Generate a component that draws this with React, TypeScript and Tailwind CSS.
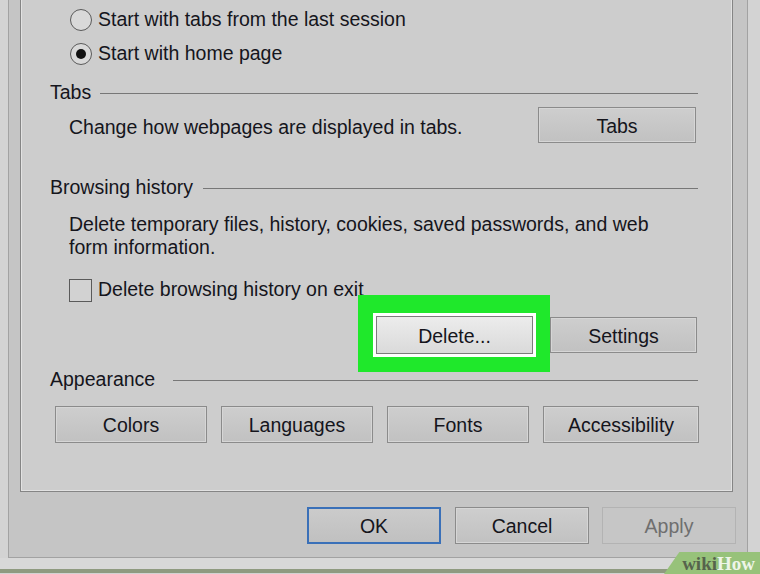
import type { ReactNode } from "react";

type WinButtonProps = {
  children: ReactNode;
  className?: string;
};

function WinButton({ children, className = "" }: WinButtonProps) {
  return (
    <button
      type="button"
      className={`flex shrink-0 items-center justify-center border border-[#8b8b8b] bg-gradient-to-b from-[#cecece] to-[#c1c1c1] pt-[3px] text-[19.5px] text-[#15151c] shadow-[inset_0_0_0_1px_#d6d6d6] ${className}`}
    >
      {children}
    </button>
  );
}

function GroupHeader({ label, gap }: { label: string; gap: string }) {
  return (
    <div className={`flex h-[24px] items-center ${gap}`}>
      <span className="leading-none">{label}</span>
      <div className="h-px flex-1 bg-[#777777]" />
    </div>
  );
}

function Radio({ checked }: { checked?: boolean }) {
  return (
    <span className="flex h-[22px] w-[22px] items-center justify-center rounded-full border-[1.5px] border-[#5a5a5a] bg-[#d9d9d9]">
      {checked && <span className="h-[10px] w-[10px] rounded-full bg-[#111111]" />}
    </span>
  );
}

export default function App() {
  return (
    <div className="relative h-[574px] w-[760px] overflow-hidden bg-[#d3d3d3] font-['Liberation_Sans',Arial,sans-serif] text-[19.5px] text-[#15151c]">
      {/* dialog body */}
      <div className="ml-[8px] w-[740px] border-x border-b border-[#a2a2a2] bg-[#c5c5c5] pb-[13px]">
        {/* tab page */}
        <div className="ml-[11px] w-[713px] border-x border-b border-[#858585] bg-[#cdcdcd] pb-[48px] pl-[29px] pr-[34px] pt-[3px] shadow-[inset_1px_0_0_#e2e2e2,inset_-1px_0_0_#e2e2e2,inset_0_-1px_0_#e2e2e2]">
          <div className="ml-[20px] flex h-[34px] items-center gap-[6px]">
            <Radio />
            <span>Start with tabs from the last session</span>
          </div>
          <div className="ml-[20px] flex h-[34px] items-center gap-[6px]">
            <Radio checked />
            <span>Start with home page</span>
          </div>

          <div className="mt-[10px]">
            <GroupHeader label="Tabs" gap="gap-[9px]" />
          </div>
          <div className="ml-[19px] mt-[2px] flex h-[36px] items-center justify-between">
            <span className="pt-[6px]">Change how webpages are displayed in tabs.</span>
            <WinButton className="mr-[2px] h-[36px] w-[158px]">Tabs</WinButton>
          </div>

          <div className="mt-[33px]">
            <GroupHeader label="Browsing history" gap="gap-[10px]" />
          </div>
          <p className="ml-[19px] mt-[13px] leading-[23px]">
            Delete temporary files, history, cookies, saved passwords, and web
            <br />
            form information.
          </p>
          <div className="ml-[19px] mt-[19px] flex h-[24px] items-center gap-[6px]">
            <span className="h-[23px] w-[23px] border-[1.5px] border-[#5a5a5a] bg-[#d2d2d2]" />
            <span>Delete browsing history on exit</span>
          </div>
          <div className="mt-[14px] flex h-[38px] items-center justify-end gap-[17px]">
            <div className="relative">
              <div className="absolute -bottom-[18px] -left-[18px] -right-[17px] -top-[21px] bg-[#1fe82b]" />
              <div className="absolute -inset-[3px] bg-white" />
              <button
                type="button"
                className="relative flex h-[38px] w-[157px] items-center justify-center border border-[#7c7c7c] bg-gradient-to-b from-[#ececec] to-[#dadada] pt-[3px] text-[19.5px] text-[#15151c]"
              >
                Delete...
              </button>
            </div>
            <WinButton className="mr-[1px] h-[36px] w-[147px]">Settings</WinButton>
          </div>

          <div className="mt-[14px]">
            <GroupHeader label="Appearance" gap="gap-[18px]" />
          </div>
          <div className="ml-[5px] mt-[14px] flex gap-[14px]">
            <WinButton className="h-[37px] w-[152px]">Colors</WinButton>
            <WinButton className="h-[37px] w-[152px]">Languages</WinButton>
            <WinButton className="h-[37px] w-[142px]">Fonts</WinButton>
            <WinButton className="h-[37px] w-[156px]">Accessibility</WinButton>
          </div>
        </div>

        {/* dialog buttons */}
        <div className="mt-[15px] flex justify-end pr-[11px]">
          <button
            type="button"
            className="flex h-[37px] w-[134px] items-center justify-center border-2 border-[#3a70b8] bg-gradient-to-b from-[#cbcbcb] to-[#c0c0c0] pt-[3px] text-[19.5px] text-[#15151c]"
          >
            OK
          </button>
          <WinButton className="ml-[14px] h-[37px] w-[134px]">Cancel</WinButton>
          <button
            type="button"
            className="ml-[13px] flex h-[37px] w-[134px] items-center justify-center border border-[#b3b3b3] bg-[#c6c6c6] pt-[3px] text-[19.5px] text-[#6f6f6f]"
          >
            Apply
          </button>
        </div>
      </div>
      <div className="h-[11px] bg-[#d8d8d8]" />
      <div className="h-[4px] bg-[#8f9a80]" />

      {/* wikiHow watermark */}
      <div className="absolute bottom-0 right-0 flex h-[22px] w-[96px] items-center justify-end bg-[#97c27a] pr-[5px] font-['Liberation_Serif',serif] text-[19px] font-bold leading-none [clip-path:polygon(16%_0,100%_0,100%_100%,0_100%)]">
        <span className="text-[#56634c]">wiki</span>
        <span className="text-[#eef5e8]">How</span>
      </div>
    </div>
  );
}
